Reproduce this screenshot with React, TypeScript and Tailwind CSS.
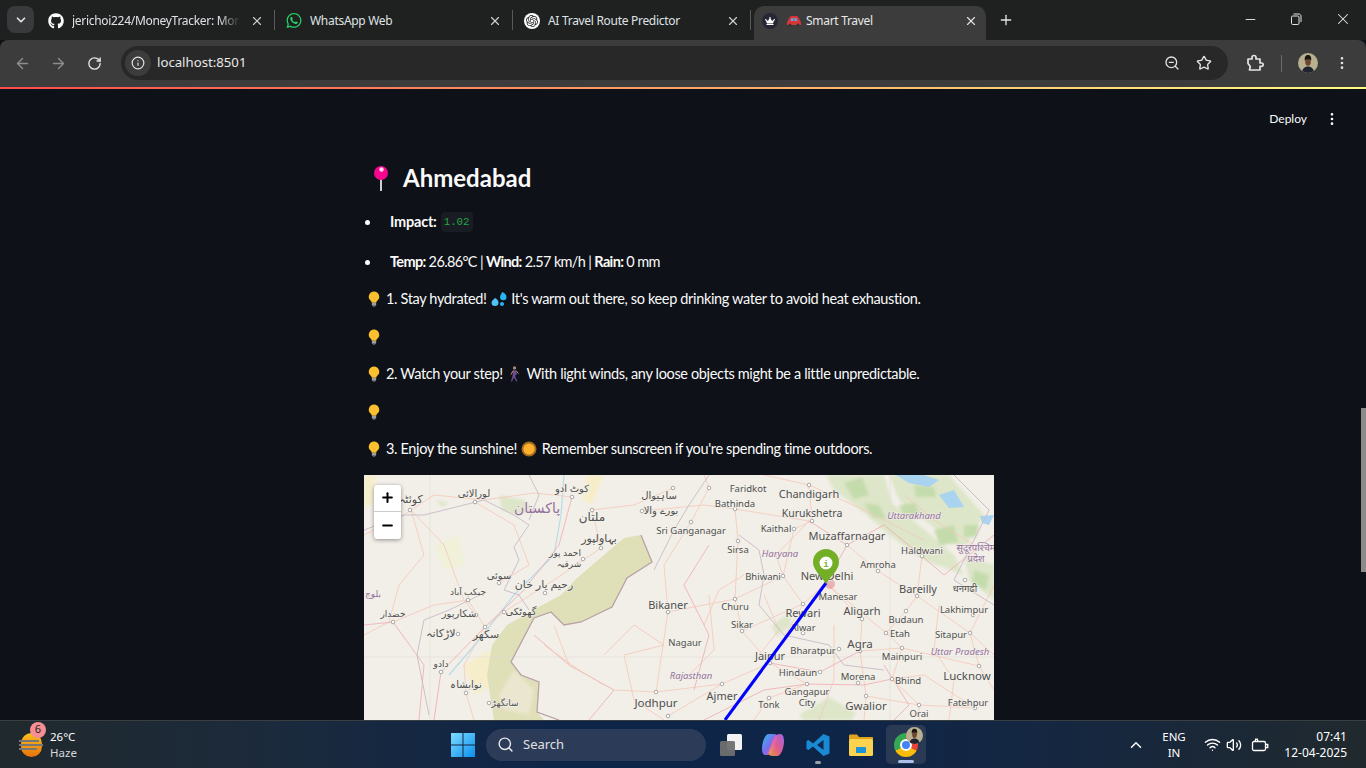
import React from 'react';
import { ArrowLeft, ArrowRight, ChevronDown, ChevronUp, Info, Minus, MoreVertical, Plus, RotateCw, Search, Star, Volume2, Wifi, X, ZoomOut } from 'lucide-react';
import { FaCrown, FaGithub, FaWhatsapp } from 'react-icons/fa';
import { SiOpenai } from 'react-icons/si';

// --- small emoji drawings ---
const Bulb = () => (
  <svg width="14" height="16" viewBox="0 0 14 16" className="inline">
    <path d="M7 0.5a5.2 5.2 0 0 0-3.2 9.3c.7.6.9 1.200 1 1.900h4.400c.1-.7.3-1.300 1-1.900A5.200 5.200 0 0 0 7 .5z" fill="#fbc02d" />
    <rect x="4.800" y="11.700" width="4.400" height="3" rx="1" fill="#9e9e9e" />
    <rect x="5.800" y="14.500" width="2.400" height="1.200" fill="#757575" />
  </svg>
);

const Pushpin = () => (
  <svg width="18" height="26" viewBox="0 0 18 26">
    <rect x="8" y="11" width="2" height="15" fill="#cfcfcf" />
    <circle cx="9" cy="8" r="7" fill="#f4068e" />
    <circle cx="9.500" cy="4.500" r="2.200" fill="#ffd6ec" />
  </svg>
);

const Drops = () => (
  <svg width="16" height="15" viewBox="0 0 16 15" className="mx-[1px] inline align-[-3px]">
    <path d="M11 0c2.500 1 4.500 2.500 4.500 5a3.200 3.200 0 0 1-6.400 0C9.100 3.500 10.500 2 11 0z" fill="#29b6f6" />
    <path d="M4 6c2 1 3.500 2.500 3.500 4.500a3.500 3.500 0 0 1-7 0C.5 8.500 3 7.500 4 6z" fill="#4fc3f7" />
    <circle cx="11" cy="12" r="2" fill="#29b6f6" />
  </svg>
);

const Walker = () => (
  <svg width="13" height="16" viewBox="0 0 13 16" className="mx-[2px] inline align-[-3px]">
    <circle cx="6.500" cy="2" r="1.700" fill="#a1887f" />
    <path d="M5 4.500h3l1 4-1.500.3-.2 2L9.500 15.500H8.300L5.800 11.500 4 15.500H3l1.700-6.500z" fill="#6a4c93" />
    <path d="M5.200 4.600 3 8.500M8 4.700l2.500 3" stroke="#c8956d" strokeWidth="1" fill="none" />
  </svg>
);

const Sun = () => (
  <svg width="16" height="16" viewBox="0 0 16 16" className="mx-[1px] inline align-[-3px]">
    <circle cx="8" cy="8" r="7.500" fill="#f59e20" opacity="0.65" />
    <circle cx="8" cy="8" r="5.600" fill="#ffb02e" />
  </svg>
);

const Car = () => (
  <svg width="16" height="12" viewBox="0 0 16 12" className="shrink-0">
    <path d="M1 7.500 3.500 2.500C4 1.500 5 1 6 1h4c1 0 2 .5 2.500 1.500L15 7.500V10H1z" fill="#d9343a" />
    <path d="M4.500 6 5.500 3h2v3zM8.500 3h2l1 3h-3z" fill="#60a5d8" />
    <circle cx="4" cy="10" r="1.500" fill="#333" />
    <circle cx="12" cy="10" r="1.500" fill="#333" />
  </svg>
);

const Avatar = ({ size }: { size: number }) => (
  <svg width={size} height={size} viewBox="0 0 20 20" className="rounded-full">
    <rect width="20" height="20" fill="#b8b08f" />
    <path d="M4 20c0-4 2.500-6.500 6-6.500S16 16 16 20z" fill="#1f2430" />
    <ellipse cx="10" cy="8.500" rx="2.800" ry="4.300" fill="#6b4630" />
    <path d="M6.800 7.500C6.300 3.500 8 2 10 2s3.700 1.500 3.200 5.500c-1-1.600-5.200-1.600-6.400 0z" fill="#1b1512" />
  </svg>
);

// --- map data, in px inside the map box ---
type Label = [string, number, number, number?, number?];

const cityLabels: Label[] = [
  ['کوئٹہ', 47, 28, 11], ['لورالائی', 110, 22, 10], ['کوٹ ادو', 208, 17, 10], ['ساہیوال', 295, 24, 10],
  ['بورے والا', 297, 39, 10], ['ملتان', 228, 46, 12], ['بہاولپور', 235, 67, 11], ['احمد پور', 201, 81, 9],
  ['شرقیہ', 205, 92, 9], ['سوئی', 135, 104, 10], ['رحیم یار خان', 180, 113, 11], ['جیکب آباد', 104, 120, 9],
  ['خضدار', 29, 142, 9], ['شکارپور', 95, 142, 10], ['گھوٹکی', 157, 140, 10], ['لاڑکانہ', 77, 162, 11],
  ['سکھر', 122, 163, 11], ['دادو', 77, 192, 9], ['نوابشاہ', 102, 213, 10], ['سانگھڑ', 141, 231, 9],
  ['Sri Ganganagar', 327, 59, 9.500], ['Bikaner', 304, 134, 11], ['Nagaur', 321, 171, 9.500], ['Jodhpur', 292, 232, 11.500],
  ['Faridkot', 384, 17, 9.500], ['Bathinda', 371, 32, 9.500], ['Chandigarh', 445, 23, 11], ['Kurukshetra', 448, 42, 10.500],
  ['Kaithal', 412, 57, 9.500], ['Muzaffarnagar', 483, 65, 11], ['Sirsa', 374, 78, 9.500], ['Haldwani', 558, 79, 9.500],
  ['Amroha', 514, 93, 9.500], ['Bhiwani', 399, 105, 9.500], ['New Delhi', 463, 105, 11], ['Bareilly', 554, 118, 11],
  ['धनगढी', 601, 117, 9.500], ['Manesar', 474, 125, 9.500], ['Churu', 371, 135, 9.500], ['Rewari', 439, 142, 11],
  ['Aligarh', 498, 140, 11], ['Lakhimpur', 600, 138, 9.500], ['Budaun', 542, 148, 9.500], ['Sikar', 378, 153, 9.500],
  ['Alwar', 439, 156, 9.500], ['Etah', 536, 162, 9.500], ['Sitapur', 587, 163, 9.500], ['Agra', 496, 173, 11.500],
  ['Bharatpur', 449, 179, 9.500], ['Jaipur', 406, 185, 11], ['Mainpuri', 538, 185, 9.500], ['Lucknow', 603, 205, 11.500],
  ['Hindaun', 434, 201, 9.500], ['Morena', 494, 205, 9.500], ['Bhind', 544, 209, 9.500], ['Ajmer', 358, 225, 11],
  ['Gangapur', 443, 220, 9.500], ['City', 443, 231, 9.500], ['Tonk', 405, 233, 9.500], ['Gwalior', 502, 235, 11.500],
  ['Fatehpur', 604, 231, 9.500], ['Orai', 555, 242, 9.500],
];

const regionLabels: Label[] = [
  ['پاکستان', 173, 38, 14], ['بلوچ', 9, 122, 9], ['Rajasthan', 327, 204, 9.500, 1], ['Uttarakhand', 550, 44, 9.500, 1],
  ['Haryana', 416, 82, 9.500, 1], ['Uttar Pradesh', 596, 180, 9.500, 1], ['सुदूरपश्चिम', 612, 76, 9.500], ['प्रदेश', 612, 87, 9.500],
];

const towns: [number, number][] = [
  [46, 35], [111, 27], [208, 22], [228, 35], [278, 36], [309, 13], [237, 73], [219, 84], [135, 108], [181, 118], [104, 125],
  [29, 147], [112, 140], [140, 137], [94, 159], [121, 152], [77, 197], [102, 218], [125, 228], [304, 137], [292, 217], [304, 241],
  [345, 13], [371, 34], [445, 10], [448, 46], [430, 54], [327, 47], [374, 66], [483, 70], [558, 81], [514, 96], [419, 101],
  [553, 121], [601, 105], [439, 129], [371, 124], [498, 144], [542, 136], [609, 140], [378, 156], [439, 158], [522, 158], [606, 158],
  [496, 176], [475, 174], [538, 173], [406, 188], [615, 191], [456, 197], [494, 208], [528, 204], [358, 209], [443, 209], [405, 223], [502, 221], [611, 233], [555, 230],
];

const roads: string[] = [
  '0,60 40,40 47,35 70,20 120,25 170,18 208,22', '47,35 60,80 35,110 25,147 0,160', '47,35 80,70 100,125 112,140',
  '111,27 150,50 165,90 135,108', '208,22 195,70 160,115 121,152 77,197 70,245', '228,35 270,30 309,13', '228,35 237,73 190,105 140,137 121,152',
  '121,152 100,190 102,218 110,245', '29,147 70,130 104,125 121,152', '0,150 29,147 60,190 55,245', '278,36 340,30 371,34 445,46',
  '327,47 300,90 304,137 292,217', '371,34 374,66 371,124 378,156 406,188 358,209 304,241', '445,10 448,46 430,54 419,101 439,129 406,188',
  '445,46 483,70 462,108', '483,70 514,96 553,121 606,158 615,191', '462,108 498,144 496,176 502,221 500,245', '462,108 439,129 378,156',
  '462,108 522,158 538,173 615,191', '496,176 456,197 406,188', '496,176 538,173 528,204 555,230 555,245', '558,81 553,121 542,136 522,158',
  '304,137 371,124 419,101', '292,217 358,209', '170,160 205,190 250,215 225,245', '205,190 190,150', '250,215 292,217',
  '300,170 270,150 240,180', '345,120 350,175 325,200', '340,245 400,215 443,209 500,210 528,204', '406,188 443,209 405,223 390,245',
  '630,110 606,158 630,180', '615,191 630,215', '611,233 560,200 528,204', '630,60 580,100 558,81 520,50 483,70', '502,221 555,230 611,233',
  '340,0 345,13 327,47', '400,0 445,10 500,35 560,65', '445,46 412,80 419,101', '345,70 320,110 345,160 330,215',
  '540,20 570,45 610,70', '380,100 355,115 340,150', '470,150 470,205 455,245', '575,130 570,175 590,205 585,245', '520,190 545,230 530,245',
  '400,120 415,155 395,180', '240,210 215,195 180,170', '300,245 270,225 260,180 300,170',
];

const borders: string[] = [
  '0,55 40,40 60,40 120,25 150,40 165,50 150,72 155,85 140,115 155,120 165,135',
  '165,0 175,20 165,45', '120,118 85,135 60,145 53,180 65,240',
  '290,95 310,55 325,30 345,0', '375,60 395,75 400,100 395,130 420,160 465,170 480,190 520,195',
  '590,0 625,35 605,75 590,105 630,130',
];

const desert = '277,60 288,87 263,103 248,132 217,147 200,150 187,137 170,143 147,187 157,200 175,207 173,237 180,245 130,245 123,200 128,170 143,150 173,133 197,120 213,103 240,80 260,63';
const hills: string[] = [
  '462,0 520,0 528,28 555,50 590,80 600,100 560,85 525,60 497,35 470,15', '525,0 585,0 620,40 600,75 560,45 535,25',
  '600,80 630,90 630,125 605,105', '135,20 160,25 170,35 150,40 138,35', '72,25 85,28 78,32', '408,150 425,138 428,150 412,162',
  '435,240 465,222 492,238 488,245 440,245',
];
const hillShade: string[] = [
  '480,8 498,2 505,20 490,24', '535,30 552,28 556,44 540,42', '570,55 590,50 594,68 576,70', '610,95 625,100 622,115 608,108', '500,28 515,30 522,44 508,42', '550,10 570,12 572,22 552,22', '600,50 615,50 612,62 600,62',
];
const lakes: string[] = ['532,0 560,0 575,5 565,12 545,8', '575,20 590,15 600,32 585,33', '616,41 630,40 625,50 618,48'];

const MapView = () => (
  <div className="relative h-[245px] w-[630px] shrink-0 overflow-hidden bg-[#f2efe9]">
    <svg width="630" height="245" viewBox="0 0 630 245" className="block font-['Noto_Sans','DejaVu_Sans',sans-serif]">
      <defs>
        <filter id="soft"><feGaussianBlur stdDeviation="1.800" /></filter>
      </defs>
      <g filter="url(#soft)">
        <polygon points="100,190 125,175 128,210 110,220" fill="#f6eecb" />
        <polygon points="0,0 12,0 8,30 0,32" fill="#f6eecb" />
        <polygon points="222,0 240,0 228,30 218,25" fill="#f6eecb" />
        <polygon points="70,70 95,60 100,90 80,95" fill="#f0f1d8" />
        {hills.map((p, i) => <polygon key={i} points={p} fill="#dde6c8" />)}
        {hillShade.map((p, i) => <polygon key={i} points={p} fill="#c4dbac" />)}
      </g>
      <polygon points={desert} fill="#dfdfb8" />
      <polygon points="135,220 150,195 170,215 165,240 140,235" fill="#ebe6cf" filter="url(#soft)" />
      {lakes.map((p, i) => <polygon key={i} points={p} fill="#a9d3ee" />)}
      <line x1="66" y1="0" x2="66" y2="245" stroke="#dfdcd6" strokeWidth="0.6" />
      <line x1="526" y1="0" x2="526" y2="245" stroke="#dfdcd6" strokeWidth="0.6" />
      <line x1="0" y1="182" x2="630" y2="182" stroke="#dfdcd6" strokeWidth="0.6" />
      <polyline points="200,0 197,40 190,80 150,120 115,165 85,200" fill="none" stroke="#b7dbe8" strokeWidth="1.2" />
      {roads.map((p, i) => <polyline key={i} points={p} fill="none" stroke={i % 5 === 4 ? '#f0a9ae' : '#f6c6b6'} strokeWidth="0.8" />)}
      {borders.map((p, i) => <polyline key={i} points={p} fill="none" stroke="#cdbfca" strokeWidth="1" />)}
      <polyline points="277,60 288,87 263,103 248,132 217,147 200,150 187,137 170,143 147,187 157,200 175,207 173,237 195,245" fill="none" stroke="#b8a2a6" strokeWidth="1.300" />
      <circle cx="466" cy="109" r="5" fill="#e58a95" opacity="0.6" />
      {towns.map(([x, y], i) => <circle key={i} cx={x} cy={y} r="1.800" fill="#fff" stroke="#8a8a8a" strokeWidth="0.7" />)}
      {cityLabels.map(([t, x, y, s], i) => (
        <text key={i} x={x} y={y} fontSize={s} textAnchor="middle" fill="#4f4f4f" stroke="#f2efe9" strokeWidth="1.500" paintOrder="stroke">{t}</text>
      ))}
      {regionLabels.map(([t, x, y, s, it], i) => (
        <text key={i} x={x} y={y} fontSize={s} fontStyle={it ? 'italic' : 'normal'} textAnchor="middle" fill="#94709c" stroke="#f2efe9" strokeWidth="1.200" paintOrder="stroke">{t}</text>
      ))}
      <line x1="462" y1="108" x2="361" y2="245" stroke="#0000ff" strokeWidth="3" />
      {/* folium marker */}
      <path d="M462 109C458 101 449 96 449 87a13 13 0 0 1 26 0c0 9-9 14-13 22z" fill="#72af26" />
      <circle cx="462" cy="88" r="6.500" fill="#fff" />
      <text x="462" y="91.500" fontSize="9" fontWeight="700" textAnchor="middle" fill="#72af26" className="font-['Liberation_Mono',monospace]">i</text>
    </svg>
    <div className="absolute left-[10px] top-[10px] flex w-[27px] flex-col overflow-hidden rounded-[3px] bg-white shadow-[0_1px_4px_rgba(0,0,0,0.4)]">
      <div className="flex h-[27px] items-center justify-center border-b border-[#ccc]"><Plus size={15} strokeWidth={3.200} className="text-black" /></div>
      <div className="flex h-[27px] items-center justify-center"><Minus size={15} strokeWidth={3.200} className="text-black" /></div>
    </div>
  </div>
);

// --- browser chrome ---
const Tab = ({ icon, title, fade }: { icon: React.ReactNode; title: string; fade?: boolean }) => (
  <div className="relative flex h-[34px] w-[238px] shrink-0 items-center pb-[5px] pl-[11px] pr-[11px]">
    <div className="flex w-4 shrink-0 justify-center">{icon}</div>
    <div className={fade
      ? 'ml-2 w-[168px] overflow-hidden whitespace-nowrap text-[12px] tracking-[-0.3px] text-[#dfe1e5] [mask-image:linear-gradient(90deg,#000_88%,transparent)]'
      : 'ml-2 w-[168px] overflow-hidden whitespace-nowrap text-[12px] tracking-[-0.3px] text-[#dfe1e5]'}>{title}</div>
    <X size={14} className="ml-auto text-[#d0d0d0]" />
    <div className="absolute right-0 top-[4px] h-[20px] w-px bg-[#5a5a5a]" />
  </div>
);

const RestoreIcon = () => (
  <svg width="12" height="12" viewBox="0 0 12 12" fill="none" stroke="currentColor" strokeWidth="1">
    <rect x="1.500" y="3" width="7.500" height="8.500" rx="1.200" />
    <path d="M3.500 1h5.500c1 0 2 1 2 2v6" />
  </svg>
);

const ExtensionIcon = () => (
  <svg width="18" height="18" viewBox="0 0 18 18" fill="none" stroke="currentColor" strokeWidth="1.700" strokeLinejoin="round">
    <path d="M2 5h4V3.500a2 2 0 0 1 4 0V5h4v4h1.500v0a1.700 1.700 0 0 1 0 3.400H14V16H3.500l.8-3.500L2 9.500z" />
  </svg>
);

const BatteryIcon = () => (
  <svg width="18" height="16" viewBox="0 0 18 16" fill="none" stroke="currentColor" strokeWidth="1.300">
    <rect x="1.500" y="4.500" width="13" height="9" rx="1.500" />
    <path d="M15 7.500h1.800v3H15" />
    <path d="M4 4.500 5 1.500M7 4.500l-1-3" />
  </svg>
);

const TabStrip = () => (
  <div className="flex h-[40px] items-end bg-[#1f2121] text-[#e3e3e3]">
    <div className="mb-[7px] ml-[7px] mr-[3px] flex h-[27px] w-[27px] items-center justify-center rounded-lg bg-[#393a3b]">
      <ChevronDown size={14} strokeWidth={3} />
    </div>
    <Tab icon={<FaGithub size={16} className="text-white" />} title="jerichoi224/MoneyTracker: Mon" fade />
    <Tab icon={<FaWhatsapp size={17} className="text-[#25d366]" />} title="WhatsApp Web" />
    <Tab icon={<span className="flex h-4 w-4 items-center justify-center rounded-full bg-white"><SiOpenai size={12} className="text-[#222]" /></span>} title="AI Travel Route Predictor" />
    <div className="mx-[3px] flex h-[34px] w-[232px] shrink-0 items-center rounded-t-[10px] bg-[#3c3c3c] pb-[5px] pl-[8px] pr-[8px]">
      <span className="flex h-4 w-4 items-center justify-center rounded-full bg-[#262736]"><FaCrown size={10} className="text-white" /></span>
      <span className="ml-[8px]"><Car /></span>
      <span className="ml-[4px] text-[12px] tracking-[-0.3px] text-[#e8e8e8]">Smart Travel</span>
      <X size={14} className="ml-auto text-[#e0e0e0]" />
    </div>
    <Plus size={16} className="mb-[12px] ml-[9px] text-[#e3e3e3]" />
    <div className="mb-[12px] ml-auto flex items-center gap-[32px] pr-[14px]">
      <Minus size={15} strokeWidth={1.500} />
      <RestoreIcon />
      <X size={18} strokeWidth={1.400} />
    </div>
  </div>
);

const Toolbar = () => (
  <div className="flex h-[47px] items-start rounded-t-lg bg-[#3c3c3c] pt-[6px] text-[#e3e3e3]">
    <ArrowLeft size={17} className="ml-[14px] mt-[8.500px] text-[#8d8d8d]" />
    <ArrowRight size={17} className="ml-[19px] mt-[8.500px] text-[#8d8d8d]" />
    <RotateCw size={15} strokeWidth={2.200} className="ml-[20px] mt-[9.500px]" />
    <div className="ml-[19px] flex h-[34px] w-[1107px] items-center rounded-full bg-[#282828] pl-[4px] pr-[16px]">
      <span className="flex h-[26px] w-[26px] items-center justify-center rounded-full bg-[#3c3c3c]"><Info size={14} /></span>
      <span className="ml-[6px] text-[13.200px] text-[#e8e8e8]">localhost:8501</span>
      <ZoomOut size={16} className="ml-auto" />
      <Star size={16} strokeWidth={2} className="ml-[16px]" />
    </div>
    <span className="ml-[18px] mt-[8px]"><ExtensionIcon /></span>
    <div className="ml-[17px] mt-[9px] h-[17px] w-px bg-[#6a6a6a]" />
    <span className="ml-[16px] mt-[7px]"><Avatar size={20} /></span>
    <MoreVertical size={16} className="ml-[16px] mt-[9px]" />
  </div>
);

// --- streamlit page ---
const Tip = ({ children, last }: { children?: React.ReactNode; last?: boolean }) => (
  <p className={last
    ? 'mb-[15px] h-[22.500px] whitespace-pre text-[14.500px] leading-[22.500px] tracking-[-0.35px] text-[#fafafa]'
    : 'mb-[15px] h-[22.500px] whitespace-pre text-[14.500px] leading-[22.500px] tracking-[-0.35px] text-[#fafafa]'}>
    <span className="ml-[3px] mr-[6px] inline-block w-[13px] align-[1px]"><Bulb /></span>
    {children}
  </p>
);

const Page = () => (
  <div className="relative min-h-0 flex-1 overflow-hidden bg-[#0e1117] font-['Lato',sans-serif]">
    <div className="flex h-[60px] items-center justify-end pr-[26px] text-[12px] text-[#fafafa]">
      <span>Deploy</span>
      <MoreVertical size={16} className="ml-[17px]" />
    </div>
    <div className="ml-[364px] w-[630px]">
      <h2 className="flex h-[58px] items-center pl-[8px] text-[24px] font-bold text-[#fafafa]">
        <Pushpin />
        <span className="ml-[13px]">Ahmedabad</span>
      </h2>
      <ul className="mt-[1px] text-[14.500px] text-[#fafafa]">
        <li className="flex h-[28px] items-center">
          <span className="ml-[1px] h-[5px] w-[5px] rounded-full bg-white" />
          <strong className="ml-[20px] font-bold tracking-[-0.2px]">Impact:</strong>
          <code className="ml-[4px] rounded bg-[#1a1c24] px-[3px] py-[2px] font-['Liberation_Mono',monospace] text-[10.800px] text-[#21a642]">1.02</code>
        </li>
        <li className="mb-[11px] mt-[12px] flex h-[28px] items-center whitespace-pre">
          <span className="ml-[1px] h-[5px] w-[5px] rounded-full bg-white" />
          <span className="ml-[20px] tracking-[-0.65px]"><strong>Temp:</strong> 26.86°C | <strong>Wind:</strong> 2.57 km/h | <strong>Rain:</strong> 0 mm</span>
        </li>
      </ul>
      <Tip>1. Stay hydrated! <Drops /> It's warm out there, so keep drinking water to avoid heat exhaustion.</Tip>
      <Tip />
      <Tip>2. Watch your step! <Walker /> With light winds, any loose objects might be a little unpredictable.</Tip>
      <Tip />
      <Tip last>3. Enjoy the sunshine! <Sun /> Remember sunscreen if you're spending time outdoors.</Tip>
      <MapView />
    </div>
    <div className="absolute right-0 top-[319px] h-[164px] w-[5px] bg-[#8a8a8a]" />
  </div>
);

// --- windows taskbar ---
const WinLogo = () => (
  <svg width="24" height="24" viewBox="0 0 24 24">
    <defs>
      <linearGradient id="win" x1="0" y1="0" x2="1" y2="1">
        <stop offset="0" stopColor="#7fdcff" />
        <stop offset="1" stopColor="#0a8fee" />
      </linearGradient>
    </defs>
    <path d="M0 0h11.500v11.500H0zM12.500 0H24v11.500H12.500zM0 12.500h11.500V24H0zM12.500 12.500H24V24H12.500z" fill="url(#win)" />
  </svg>
);

const TaskView = () => (
  <svg width="24" height="24" viewBox="0 0 24 24">
    <rect x="8" y="1" width="15" height="16" rx="1.500" fill="#f2f2f2" />
    <rect x="1" y="8" width="15" height="15" rx="1.500" fill="#6f6f6f" opacity="0.95" />
  </svg>
);

const Copilot = () => (
  <svg width="24" height="24" viewBox="0 0 24 24">
    <defs>
      <linearGradient id="cop1" x1="0" y1="0" x2="1" y2="1">
        <stop offset="0" stopColor="#29c3e8" />
        <stop offset="0.5" stopColor="#7b6cf0" />
        <stop offset="1" stopColor="#f0609a" />
      </linearGradient>
      <linearGradient id="cop2" x1="0" y1="1" x2="1" y2="0">
        <stop offset="0" stopColor="#f5a03a" />
        <stop offset="0.5" stopColor="#f0609a" />
        <stop offset="1" stopColor="#a86cf0" />
      </linearGradient>
    </defs>
    <path d="M8 1h5c2 0 3 1 3.500 3L12 18c-.5 2-2 4-5 4H5C2 22 1 20 1 16 1 9 4 1 8 1z" fill="url(#cop1)" />
    <path d="M19 1c3 0 4 3 4 7 0 7-3 15-7 15h-5c-2 0-3-1-3.500-3L12 7c.5-3 3-6 7-6z" fill="url(#cop2)" opacity="0.92" />
  </svg>
);

const VsCode = () => (
  <svg width="24" height="26" viewBox="0 0 24 24">
    <path d="M17.500 1 23.500 3.500v17l-6 2.500L7 13.500 2.500 17 .5 16V8l2-1L7 10.500z" fill="#1a8ad4" />
    <path d="M17.500 7 11 12l6.500 5z" fill="#0e2a50" />
  </svg>
);

const Folder = () => (
  <svg width="24" height="24" viewBox="0 0 24 24">
    <path d="M0 3c0-1 .5-1.500 1.500-1.500h6.500L10 4h13c.6 0 1 .4 1 1v2H0z" fill="#e0a41e" />
    <rect y="6" width="24" height="17" rx="1.500" fill="#fbd34e" />
    <rect x="7" y="14" width="10" height="6" rx="0.500" fill="#1a93d8" />
  </svg>
);

const ChromeIcon = () => (
  <div className="relative h-[24px] w-[24px]">
    <div className="h-full w-full rounded-full bg-[conic-gradient(#ea4335_0deg_120deg,#fbbc05_120deg_240deg,#34a853_240deg_360deg)]" />
    <div className="absolute left-[6px] top-[6px] h-[12px] w-[12px] rounded-full border-2 border-white bg-[#4285f4]" />
  </div>
);

const Taskbar = () => (
  <div className="flex h-[48px] items-center border-t border-[#3a3f42] bg-[linear-gradient(90deg,#20292d_0%,#1b2a3c_20%,#0f2548_40%,#0f2548_62%,#16273f_80%,#20292d_100%)] font-['Noto_Sans',sans-serif] text-white">
    <div className="relative ml-[19px] flex h-[24px] w-[24px] flex-col justify-center gap-[2px]">
      <div className="absolute left-[2px] top-0 h-[24px] w-[21px] rounded-full bg-[linear-gradient(#fcc21b,#e8720c)]" />
      <div className="relative h-[2px] w-[20px] bg-[#777]" />
      <div className="relative h-[2px] w-[24px] bg-[#777]" />
      <div className="relative h-[2px] w-[18px] bg-[#777]" />
      <div className="absolute left-[11px] top-[-11px] flex h-[16px] w-[16px] items-center justify-center rounded-full bg-[#f58f93] text-[11px] text-[#222]">6</div>
    </div>
    <div className="ml-[7px] w-[60px] text-[11.500px] leading-[16px]">
      <div>26°C</div>
      <div className="text-[#d8d8d8]">Haze</div>
    </div>
    <div className="ml-[341px]"><WinLogo /></div>
    <div className="ml-[11px] flex h-[32px] w-[220px] items-center rounded-full bg-[#2c3c58] pl-[11px]">
      <Search size={17} className="text-[#e8e8e8]" />
      <span className="ml-[9px] text-[13px] text-[#e0e0e0]">Search</span>
    </div>
    <div className="ml-[13px]"><TaskView /></div>
    <div className="ml-[18px]"><Copilot /></div>
    <div className="relative ml-[21px]">
      <VsCode />
      <div className="absolute bottom-[-6px] left-[9px] h-[3px] w-[6px] rounded-full bg-[#9aa0a6]" />
    </div>
    <div className="ml-[19px]"><Folder /></div>
    <div className="relative ml-[13px] flex h-[39px] w-[40px] items-center justify-center rounded-[5px] bg-[#2a3a55]">
      <ChromeIcon />
      <span className="absolute right-[3px] top-[2px]"><Avatar size={17} /></span>
      <div className="absolute bottom-[1px] left-[12px] h-[3px] w-[16px] rounded-full bg-[#a9c1e8]" />
    </div>
    <ChevronUp size={18} className="ml-[201px]" />
    <div className="ml-[14px] w-[30px] text-center text-[11.500px] leading-[16px]">
      <div>ENG</div>
      <div>IN</div>
    </div>
    <Wifi size={17} className="ml-[15px]" />
    <Volume2 size={16} className="ml-[5px]" />
    <span className="ml-[9px]"><BatteryIcon /></span>
    <div className="ml-auto pr-[19px] text-right text-[12px] leading-[16px]">
      <div>07:41</div>
      <div>12-04-2025</div>
    </div>
  </div>
);

export default function App() {
  return (
    <div className="flex h-[768px] w-[1366px] flex-col overflow-hidden bg-[#0e1117] font-['Noto_Sans',sans-serif]">
      <TabStrip />
      <Toolbar />
      <div className="h-[2px] bg-[linear-gradient(90deg,#ff4b4b,#fffd80)]" />
      <Page />
      <Taskbar />
    </div>
  );
}
